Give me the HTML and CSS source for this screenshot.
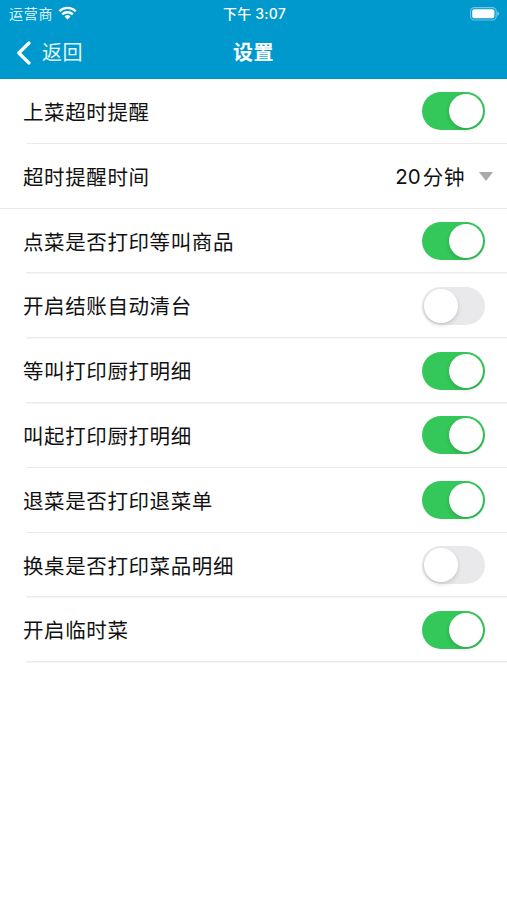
FILE: index.html
```html
<!DOCTYPE html>
<html lang="zh-CN">
<head>
    <meta charset="UTF-8">
    <meta name="viewport" content="width=device-width, initial-scale=1.0">
    <title>设置</title>
    <link rel="stylesheet" href="styles.css">
</head>
<body>
    <header class="header">
        <div class="status-bar">
            <div class="carrier">
                <span>运营商</span>
                <svg class="wifi" width="19" height="14" viewBox="0 0 19 14">
                    <path d="M1.3 5.3a11.7 11.7 0 0 1 16.4 0M4.2 8.4a7.6 7.6 0 0 1 10.6 0" fill="none" stroke="#fff" stroke-width="2.3"/>
                    <path d="M9.5 13.6l-3-3.1a4.3 4.3 0 0 1 6 0z" fill="#fff"/>
                </svg>
            </div>
            <div class="time">下午 3:07</div>
            <svg class="battery" width="31" height="14" viewBox="0 0 31 14">
                <rect x="1.6" y="0.6" width="25.6" height="12.4" rx="3.8" fill="none" stroke="#fff" stroke-opacity="0.45" stroke-width="1.1"/>
                <rect x="3.2" y="2.3" width="22.2" height="9" rx="2" fill="#fff"/>
                <path d="M28.4 4.5q3.6 2.2 0 4.4z" fill="#fff" fill-opacity="0.5"/>
            </svg>
        </div>
        <nav class="nav-bar">
            <a class="back">
                <svg width="15" height="24" viewBox="0 0 15 24">
                    <path d="M13 2L2.8 12 13 22" fill="none" stroke="#fff" stroke-width="3.2" stroke-linecap="round" stroke-linejoin="round"/>
                </svg>
                <span>返回</span>
            </a>
            <h1>设置</h1>
        </nav>
    </header>

    <ul class="settings">
        <li class="row">
            <span class="label">上菜超时提醒</span>
            <span class="switch on"></span>
        </li>
        <li class="row full">
            <span class="label">超时提醒时间</span>
            <span class="select"><span class="number">20</span>分钟<i class="arrow"></i></span>
        </li>
        <li class="row">
            <span class="label">点菜是否打印等叫商品</span>
            <span class="switch on"></span>
        </li>
        <li class="row">
            <span class="label">开启结账自动清台</span>
            <span class="switch"></span>
        </li>
        <li class="row">
            <span class="label">等叫打印厨打明细</span>
            <span class="switch on"></span>
        </li>
        <li class="row">
            <span class="label">叫起打印厨打明细</span>
            <span class="switch on"></span>
        </li>
        <li class="row">
            <span class="label">退菜是否打印退菜单</span>
            <span class="switch on"></span>
        </li>
        <li class="row">
            <span class="label">换桌是否打印菜品明细</span>
            <span class="switch"></span>
        </li>
        <li class="row">
            <span class="label">开启临时菜</span>
            <span class="switch on"></span>
        </li>
    </ul>
</body>
</html>
```
FILE: styles.css
```css
* {
    box-sizing: border-box;
}

body {
    margin: 0;
    min-height: 100vh;
    background: #fff;
    color: #111;
    font-family: Inter, "Noto Sans CJK SC", sans-serif;
}

.header {
    height: 79px;
    background: #0099cd;
    color: #fff;
}

.status-bar {
    display: grid;
    grid-template-columns: 1fr auto 1fr;
    align-items: center;
    height: 27px;
    padding: 0 7px 0 9px;
    font-size: 14px;
    line-height: 27px;
}

.carrier {
    display: flex;
    align-items: center;
    gap: 5px;
    color: #d9f2fa;
    letter-spacing: 0.8px;
}

.wifi {
    margin-top: -1px;
}

.time {
    font-size: 14px;
    font-weight: 500;
    letter-spacing: 0.2px;
}

.battery {
    justify-self: end;
}

.nav-bar {
    display: grid;
    grid-template-columns: 1fr auto 1fr;
    align-items: center;
    height: 52px;
    padding: 0 16px;
}

.back {
    display: flex;
    align-items: center;
    gap: 11px;
    font-size: 20px;
    line-height: 30px;
    letter-spacing: 0.5px;
    color: #e6f7fd;
}

.nav-bar h1 {
    margin: 0;
    font-size: 20px;
    line-height: 30px;
    font-weight: 600;
    letter-spacing: 0.5px;
}

.settings {
    margin: 0;
    padding: 0.6px 0 0;
    list-style: none;
}

.row {
    display: flex;
    align-items: center;
    justify-content: space-between;
    height: 64.8px;
    padding: 0 22px 1px 23px;
    font-size: 20.5px;
    letter-spacing: 0.6px;
    /* separator starts under the label */
    background: linear-gradient(#ebebed, #ebebed) 26px 100% / 100% 1.5px no-repeat;
}

.row.full {
    padding-right: 14px;
    background-position: 0 100%;
}

.label {
    margin-top: -1px;
}

.switch {
    width: 63px;
    height: 38px;
    padding: 2px;
    border-radius: 19px;
    background: #e9e9eb;
}

.switch::before {
    content: "";
    display: block;
    width: 34px;
    height: 34px;
    border-radius: 50%;
    background: #fff;
    box-shadow: 0 2px 4px rgba(0, 0, 0, 0.16);
}

.switch.on {
    background: #34c759;
}

.switch.on::before {
    margin-left: auto;
}

.select {
    display: flex;
    align-items: center;
}

.number {
    margin-right: 2px;
    letter-spacing: 0;
}

.arrow {
    margin-left: 14px;
    border: 7.5px solid transparent;
    border-top: 9px solid #aaa;
    border-bottom: 0;
}
```
